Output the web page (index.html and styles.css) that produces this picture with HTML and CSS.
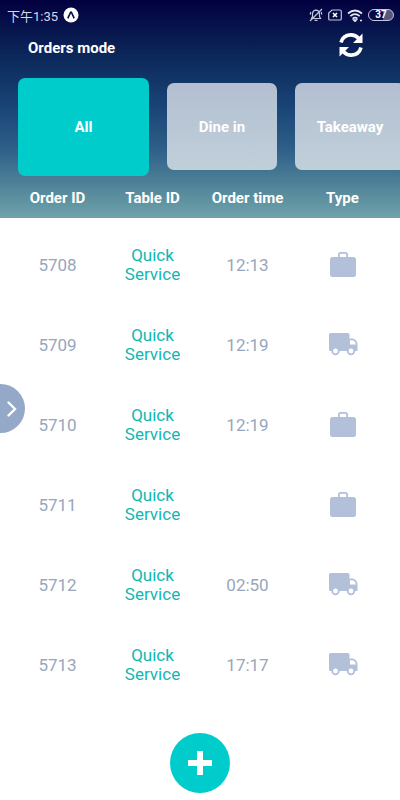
FILE: index.html
```html
<!DOCTYPE html>
<html lang="en">
<head>
    <meta charset="UTF-8">
    <meta name="viewport" content="width=device-width, initial-scale=1.0">
    <title>Orders mode</title>
    <link rel="stylesheet" href="styles.css">
</head>
<body>
    <!-- Shared icons -->
    <svg class="icon-defs" aria-hidden="true">
        <symbol id="icon-bag" viewBox="0 0 28 26">
            <path fill-rule="evenodd" d="M9 5V2.500Q9 0 11.500 0H16.500Q19 0 19 2.500V5H24.500Q27 5 27 7.500V22.500Q27 25 24.500 25H3.500Q1 25 1 22.500V7.500Q1 5 3.500 5ZM10.800 5H17.200V2.700Q17.200 1.800 16.300 1.800H11.700Q10.800 1.800 10.800 2.700Z"/>
        </symbol>
        <symbol id="icon-truck" viewBox="0 0 30 26">
            <path fill-rule="evenodd" d="M2.500 1H20Q21.500 1 21.500 2.500V6.500H24Q29.500 7 29.500 13V19H2.500Q1 19 1 17.500V2.500Q1 1 2.500 1ZM22 8.200V12.500H27.800Q27.400 8.700 24 8.200Z"/>
            <circle cx="7.500" cy="19" r="4.200"/>
            <circle cx="23" cy="19" r="4.200"/>
            <circle cx="7.500" cy="19" r="2.400" fill="#fff"/>
            <circle cx="23" cy="19" r="2.400" fill="#fff"/>
        </symbol>
    </svg>

    <div class="status-bar">
        <div class="status-left">
            <span>下午1:35</span>
            <svg width="16" height="16" viewBox="0 0 16 16">
                <circle cx="8" cy="8" r="7.500" fill="#fff"/>
                <path d="M4.800 11.300L7.300 5.800Q8 4.500 8.700 5.800L11.200 11.300" fill="none" stroke="#0a1045" stroke-width="1.600"/>
            </svg>
        </div>
        <div class="status-right">
            <svg width="14" height="14" viewBox="0 0 14 14" fill="none" stroke="#c3c6dd" stroke-width="1.200">
                <path d="M2.500 10.500H11.500L10.500 8.500V5.500Q10.200 2.500 7 2.200Q3.800 2.500 3.500 5.500V8.500ZM5.500 12.300H8.500M1 13L13 1M1.200 6.500L1.800 4M12.800 6.500L12.200 4"/>
            </svg>
            <svg width="14" height="12" viewBox="0 0 14 12" fill="none" stroke="#c3c6dd" stroke-width="1.200">
                <path d="M4 1H12Q13.300 1 13.300 2.300V9.700Q13.300 11 12 11H2Q.7 11 .7 9.700V4Z"/>
                <path d="M5 4L9 8M9 4L5 8" stroke="#fff" stroke-width="1.600"/>
            </svg>
            <svg width="16" height="13" viewBox="0 0 16 13" fill="none" stroke="#e4e6f2" stroke-width="1.700">
                <path d="M1 4.500Q8-1.500 15 4.500M3.300 7.200Q8 3.200 12.700 7.200M5.600 9.700Q8 7.700 10.400 9.700"/>
                <path d="M7 11.200L8 12.200L9 11.200Z" fill="#e4e6f2"/>
                <path d="M13 11.500H15"/>
            </svg>
            <span class="battery">37</span>
        </div>
    </div>

    <header class="page-header">
        <h1>Orders mode</h1>
        <button class="refresh" type="button" aria-label="Refresh">
            <svg width="24" height="24" viewBox="0 0 24 24">
                <path d="M2 9.500Q4 2.200 11.500 1.900Q16.500 1.800 19.500 5.200M22 14.500Q20 21.800 12.500 22.100Q7.500 22.200 4.500 18.800" fill="none" stroke="#fff" stroke-width="3.600"/>
                <path d="M23.500 .5V10H14ZM.5 23.500V14H10Z" fill="#fff"/>
            </svg>
        </button>
    </header>

    <nav class="modes">
        <button class="mode active" type="button">All</button>
        <button class="mode" type="button">Dine in</button>
        <button class="mode" type="button">Takeaway</button>
    </nav>

    <main>
        <table class="orders">
            <thead>
                <tr>
                    <th>Order ID</th>
                    <th>Table ID</th>
                    <th>Order time</th>
                    <th>Type</th>
                </tr>
            </thead>
            <tbody>
                <tr>
                    <td>5708</td>
                    <td class="service">Quick Service</td>
                    <td>12:13</td>
                    <td><svg class="type-icon" role="img" aria-label="Takeaway"><use href="#icon-bag"/></svg></td>
                </tr>
                <tr>
                    <td>5709</td>
                    <td class="service">Quick Service</td>
                    <td>12:19</td>
                    <td><svg class="type-icon" role="img" aria-label="Delivery"><use href="#icon-truck"/></svg></td>
                </tr>
                <tr>
                    <td>5710</td>
                    <td class="service">Quick Service</td>
                    <td>12:19</td>
                    <td><svg class="type-icon" role="img" aria-label="Takeaway"><use href="#icon-bag"/></svg></td>
                </tr>
                <tr>
                    <td>5711</td>
                    <td class="service">Quick Service</td>
                    <td></td>
                    <td><svg class="type-icon" role="img" aria-label="Takeaway"><use href="#icon-bag"/></svg></td>
                </tr>
                <tr>
                    <td>5712</td>
                    <td class="service">Quick Service</td>
                    <td>02:50</td>
                    <td><svg class="type-icon" role="img" aria-label="Delivery"><use href="#icon-truck"/></svg></td>
                </tr>
                <tr>
                    <td>5713</td>
                    <td class="service">Quick Service</td>
                    <td>17:17</td>
                    <td><svg class="type-icon" role="img" aria-label="Delivery"><use href="#icon-truck"/></svg></td>
                </tr>
            </tbody>
        </table>
    </main>

    <button class="drawer-handle" type="button" aria-label="Open menu">
        <svg width="10" height="16" viewBox="0 0 10 16">
            <path d="M1.500 1.500L8 8L1.500 14.500" fill="none" stroke="#fff" stroke-width="2.400" stroke-linecap="round"/>
        </svg>
    </button>

    <button class="add-order" type="button" aria-label="Add order">
        <svg width="24" height="24" viewBox="0 0 24 24">
            <path d="M9 0H15V9H24V15H15V24H9V15H0V9H9Z" fill="#fff"/>
        </svg>
    </button>
</body>
</html>
```

FILE: styles.css
```css
* {
    box-sizing: border-box;
}

body {
    margin: 0;
    font-family: Roboto, "Noto Sans CJK SC", sans-serif;
    background: #fff linear-gradient(#02003f 0, #0d2a5c 60px, #1a4678 110px, #2f6089 150px, #4b7e96 180px, #70a3aa 218px) no-repeat;
    background-size: 100% 218px;
    min-height: 100vh;
    padding-bottom: 80px;
}

button {
    border: 0;
    padding: 0;
    font-family: inherit;
    color: #fff;
    cursor: pointer;
}

.icon-defs {
    position: absolute;
    width: 0;
    height: 0;
}

.status-bar {
    display: flex;
    justify-content: space-between;
    align-items: center;
    height: 30px;
    padding: 0 6px 0 7px;
    font-size: 13px;
    color: #d5d6e8;
}

.status-left,
.status-right {
    display: flex;
    align-items: center;
    gap: 5px;
}

.battery {
    width: 26px;
    height: 12px;
    border: 1px solid #c3c6dd;
    border-radius: 6px;
    background: linear-gradient(90deg, transparent 60%, #55587f 60%);
    font-size: 10px;
    font-weight: bold;
    line-height: 10px;
    text-align: center;
    color: #fff;
}

.page-header {
    display: flex;
    justify-content: space-between;
    align-items: center;
    height: 36px;
    padding: 0 37px 0 28px;
}

.page-header h1 {
    margin: 0;
    font-size: 15px;
    color: #fff;
}

.refresh {
    height: 32px;
    padding-bottom: 4px;
    background: none;
}

/* Scrolls sideways, the last card is cut by the window edge */
.modes {
    display: flex;
    align-items: center;
    gap: 18px;
    height: 111px;
    padding: 10px 18px 0;
    overflow-x: auto;
    scrollbar-width: none;
}

.mode {
    flex: none;
    width: 110px;
    height: 87px;
    border-radius: 7px;
    background: linear-gradient(#b3bfd1, #c0d0da);
    font-size: 15px;
    font-weight: bold;
}

.mode.active {
    width: 131px;
    height: 98px;
    background: #00cdcb;
}

main {
    padding: 0 10px;
}

.orders {
    width: 100%;
    table-layout: fixed;
    border-collapse: collapse;
    text-align: center;
}

.orders th {
    height: 41px;
    padding: 0;
    font-size: 15px;
    color: #fff;
}

.orders tbody::before {
    content: "";
    display: block;
    height: 7px;
}

.orders td {
    height: 80px;
    padding: 0 16px;
    font-size: 17px;
    line-height: 19px;
    color: #97a6bb;
}

.orders .service {
    color: #10b7b3;
}

.type-icon {
    display: block;
    width: 30px;
    height: 26px;
    margin: 0 auto;
    fill: #b2c1d9;
}

.drawer-handle {
    position: fixed;
    left: 0;
    top: 48%;
    display: flex;
    align-items: center;
    width: 25px;
    height: 49px;
    padding-left: 7px;
    border-radius: 0 25px 25px 0;
    background: #94a8c8;
}

.add-order {
    position: fixed;
    left: calc(50% - 30px);
    bottom: 7px;
    display: flex;
    justify-content: center;
    align-items: center;
    width: 60px;
    height: 60px;
    border-radius: 50%;
    background: #00cdcb;
}
```
